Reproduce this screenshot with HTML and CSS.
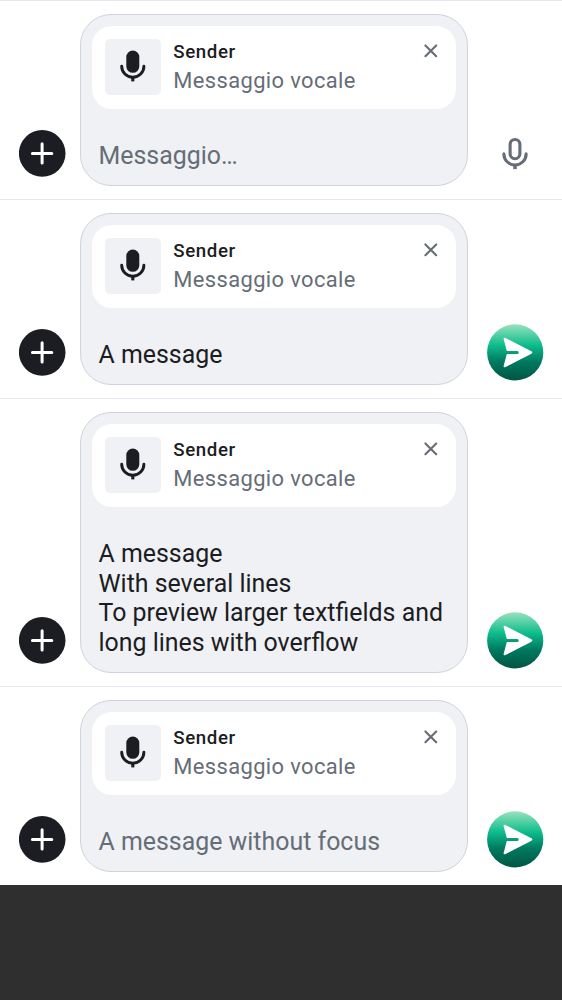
FILE: index.html
```
<!DOCTYPE html>
<html lang="it">
<head>
<meta charset="utf-8">
<title>Composer</title>
<link rel="stylesheet" href="styles.css">
</head>
<body>
<svg width="0" height="0" class="defs">
  <defs>
    <linearGradient id="send-fill" x1="0" y1="0" x2="0" y2="1">
      <stop offset="0" stop-color="#99e2bd"/>
      <stop offset="0.37" stop-color="#0dbd8b"/>
      <stop offset="0.66" stop-color="#007a61"/>
      <stop offset="1" stop-color="#005542"/>
    </linearGradient>
    <symbol id="plus" viewBox="0 0 47 47">
      <circle cx="23.2" cy="23.4" r="23.3" fill="#1b1d22"/>
      <path d="M23.1 13.8v19.2M13.4 23.4h19.4" stroke="#fff" stroke-width="3" stroke-linecap="round"/>
    </symbol>
    <symbol id="mic-solid" viewBox="0 0 38 38">
      <rect x="12.3" y="3.6" width="13" height="22.2" rx="6.5" fill="#1b1d22"/>
      <path d="M7.7 19.2a11.1 11.1 0 0 0 22.2 0" fill="none" stroke="#1b1d22" stroke-width="2.9" stroke-linecap="round"/>
      <path d="M18.8 30.5v3.9" stroke="#1b1d22" stroke-width="3.1"/>
    </symbol>
    <symbol id="mic" viewBox="0 0 38 38">
      <rect x="14.1" y="4.5" width="9.8" height="19.2" rx="4.9" fill="none" stroke="#656d77" stroke-width="3.1"/>
      <path d="M7.9 18.9a11.1 11.1 0 0 0 22.2 0" fill="none" stroke="#656d77" stroke-width="3.1" stroke-linecap="round"/>
      <path d="M19 30.2v3.9" stroke="#656d77" stroke-width="3.5"/>
    </symbol>
    <symbol id="close" viewBox="0 0 16 16">
      <path d="M2.4 2.4l10.8 10.8M13.2 2.4l-10.8 10.8" stroke="#656d77" stroke-width="2.1" stroke-linecap="round"/>
    </symbol>
    <symbol id="send" viewBox="0 0 57 57">
      <circle cx="28.2" cy="28.4" r="28.1" fill="url(#send-fill)"/>
      <path d="M18.5 14L44.4 27.3q2 1.2 0 2.4L18.5 43q-2.4 1-1.8-1.3L19.8 30h10.4a1.5 1.5 0 0 0 0-3H19.8L16.7 15.3q-.6-2.3 1.8-1.3z" fill="#fff"/>
    </symbol>
  </defs>
</svg>
<main class="list">
  <section class="composer">
    <svg class="add"><use href="#plus"/></svg>
    <div class="bubble">
      <div class="reply">
        <div class="thumb"><svg class="icon"><use href="#mic-solid"/></svg></div>
        <div class="meta"><div class="name">Sender</div><div class="kind">Messaggio vocale</div></div>
        <svg class="close"><use href="#close"/></svg>
      </div>
      <div class="text muted">Messaggio…</div>
    </div>
    <div class="action"><svg class="icon"><use href="#mic"/></svg></div>
  </section>
  <section class="composer">
    <svg class="add"><use href="#plus"/></svg>
    <div class="bubble">
      <div class="reply">
        <div class="thumb"><svg class="icon"><use href="#mic-solid"/></svg></div>
        <div class="meta"><div class="name">Sender</div><div class="kind">Messaggio vocale</div></div>
        <svg class="close"><use href="#close"/></svg>
      </div>
      <div class="text">A message</div>
    </div>
    <div class="action"><svg class="send"><use href="#send"/></svg></div>
  </section>
  <section class="composer tall">
    <svg class="add"><use href="#plus"/></svg>
    <div class="bubble">
      <div class="reply">
        <div class="thumb"><svg class="icon"><use href="#mic-solid"/></svg></div>
        <div class="meta"><div class="name">Sender</div><div class="kind">Messaggio vocale</div></div>
        <svg class="close"><use href="#close"/></svg>
      </div>
      <div class="text">A message<br>With several lines<br>To preview larger textfields and<br>long lines with overflow</div>
    </div>
    <div class="action"><svg class="send"><use href="#send"/></svg></div>
  </section>
  <section class="composer">
    <svg class="add"><use href="#plus"/></svg>
    <div class="bubble">
      <div class="reply">
        <div class="thumb"><svg class="icon"><use href="#mic-solid"/></svg></div>
        <div class="meta"><div class="name">Sender</div><div class="kind">Messaggio vocale</div></div>
        <svg class="close"><use href="#close"/></svg>
      </div>
      <div class="text muted">A message without focus</div>
    </div>
    <div class="action"><svg class="send"><use href="#send"/></svg></div>
  </section>
</main>
</body>
</html>
```
FILE: styles.css
```
* { box-sizing: border-box; }
body {
  margin: 0;
  background: #2f2f2f;
  font-family: Roboto, sans-serif;
  color: #1b1d22;
}
svg { display: block; flex: none; }
.defs { position: absolute; }
.list { background: #fff; }
.composer {
  height: 199px;
  display: flex;
  align-items: flex-end;
  padding: 13px 0 13px 19px;
  border-top: 1px solid #e5e8ee;
}
.composer.tall { height: 288px; }
.add { width: 47px; height: 47px; margin-bottom: 9px; }
.bubble {
  width: 388px;
  height: 100%;
  margin-left: 14px;
  display: flex;
  flex-direction: column;
  justify-content: space-between;
  padding: 11px 11px 14px;
  background: #f0f1f5;
  border: 1px solid #cfd4db;
  border-radius: 31px;
}
.tall .bubble { padding-bottom: 14.6px; }
.reply {
  height: 83px;
  display: flex;
  align-items: flex-start;
  padding: 12.5px 12px 12.5px 12.6px;
  background: #fff;
  border-radius: 20px;
}
.thumb {
  width: 56px;
  height: 56px;
  display: grid;
  align-content: start;
  justify-content: center;
  padding-top: 8.5px;
  background: #f0f1f5;
  border-radius: 5px;
}
.icon { width: 38px; height: 38px; }
.meta { flex: 1; padding: 1.5px 0 0 12.7px; white-space: nowrap; }
.name {
  font-size: 18.7px;
  font-weight: 500;
  line-height: 25px;
  letter-spacing: 0.6px;
}
.kind {
  margin-top: 2px;
  font-size: 21.9px;
  line-height: 28px;
  letter-spacing: 0.39px;
  color: #656d77;
}
.close { width: 16px; height: 16px; margin: 4.5px 5px 0 0; }
.text {
  padding-left: 6.5px;
  font-size: 24.92px;
  line-height: 29.6px;
  white-space: nowrap;
}
.muted { color: #656d77; }
.action {
  width: 94px;
  height: 57px;
  margin-bottom: 4px;
  display: grid;
  place-items: center;
}
.send { width: 57px; height: 57px; }
```
